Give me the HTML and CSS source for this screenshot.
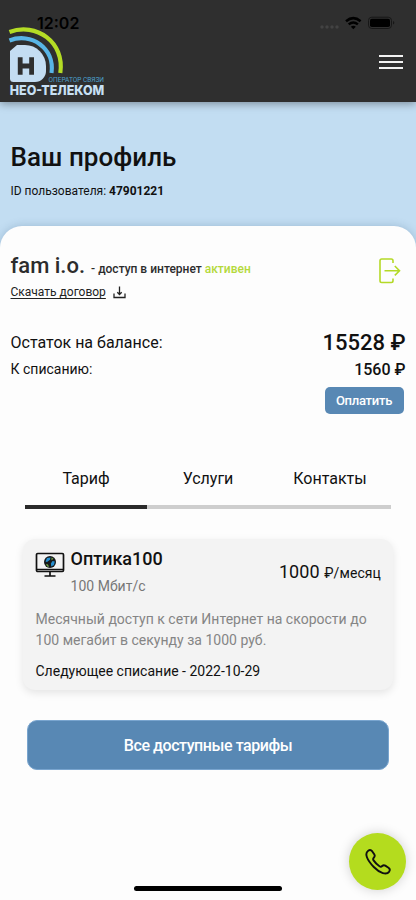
FILE: index.html
```html
<!DOCTYPE html>
<html lang="ru">
<head>
<meta charset="utf-8">
<meta name="viewport" content="width=device-width, initial-scale=1">
<title>Нео-Телеком</title>
<link rel="stylesheet" href="styles.css">
</head>
<body>
<header class="header">
  <svg class="logo" width="98" height="76" viewBox="9 25 98 76" aria-label="Нео-Телеком">
    <path d="M17 45h8a21 21 0 0 1 21 21v5a11 11 0 0 1-11 11H13.500a3.500 3.500 0 0 1-3.500-3.500V51z" fill="#c4ddf2"/>
    <path d="M20.200 57.300v17.400M31.600 57.300v17.400M20 66h12" fill="none" stroke="#2f2f2f" stroke-width="4.800"/>
    <path d="M9.500 40.500C31 32 55 48 51.500 73" fill="none" stroke="#58b5e6" stroke-width="4.200"/>
    <path d="M9.500 32C36 22 65 42 60.300 73" fill="none" stroke="#b4dc25" stroke-width="4.200"/>
    <text x="48.500" y="81.800" class="logo-sub" textLength="55.500" lengthAdjust="spacingAndGlyphs">ОПЕРАТОР СВЯЗИ</text>
    <text x="9.800" y="95" class="logo-name" textLength="94.500" lengthAdjust="spacingAndGlyphs">НЕО-ТЕЛЕКОМ</text>
  </svg>
  <button class="menu" aria-label="Меню"><span></span><span></span><span></span></button>
  <div class="status">
    <span class="time">12:02</span>
    <svg width="76" height="14" viewBox="319 16 76 14">
      <g fill="#434343"><circle cx="322" cy="27" r="1.700"/><circle cx="327" cy="27" r="1.700"/><circle cx="332" cy="27" r="1.700"/><circle cx="337" cy="27" r="1.700"/></g>
      <g fill="none" stroke="#000" stroke-width="2.500"><path d="M346 21.200q7.300-6.200 14.600 0M348.700 24.400q4.600-3.800 9.200 0"/></g>
      <path d="M350.800 26.800q2.500-1.900 5 0L353.300 29.300z"/>
      <rect x="368.500" y="17.200" width="23" height="11.300" rx="3.300" fill="none" stroke="#171717"/>
      <rect x="370" y="18.700" width="20" height="8.300" rx="1.800"/>
      <path d="M393 21v3.500q1.300-.4 1.300-1.700T393 21z" fill="#171717"/>
    </svg>
  </div>
</header>
<section class="hero">
  <h1>Ваш профиль</h1>
  <p>ID пользователя: <b>47901221</b></p>
</section>
<main class="sheet">
  <div class="account">
    <div>
      <div class="name-line"><span class="name">fam i.o.</span><span class="access">- доступ в интернет <em>активен</em></span></div>
      <a class="contract"><span>Скачать договор</span>
        <svg width="13" height="13" viewBox="0 0 13 13" fill="none" stroke="#222" stroke-width="1.300"><path d="M1 7.500V11.500H12V7.500M6.500.5V8.500M4.300 6.300l2.200 2.200 2.200-2.200"/></svg></a>
    </div>
    <svg class="exit" width="22" height="26" viewBox="0 0 22 26" fill="none" stroke="#b4d927" stroke-width="1.600"><path d="M14 5V2.700Q14 1 12.300 1H2.700Q1 1 1 2.700V22.800Q1 24.500 2.700 24.500H12.300Q14 24.500 14 22.800V20.500M5.500 12.700H20.500M15.800 8l4.700 4.700-4.700 4.700"/></svg>
  </div>
  <dl class="balance">
    <div class="row total"><dt>Остаток на балансе:</dt><dd>15528 ₽</dd></div>
    <div class="row due"><dt>К списанию:</dt><dd>1560 ₽</dd></div>
  </dl>
  <button class="pay">Оплатить</button>
  <nav class="tabs"><a class="active">Тариф</a><a>Услуги</a><a>Контакты</a></nav>
  <article class="card">
    <div class="card-head">
      <svg width="30" height="26" viewBox="0 0 30 26"><rect x="1.500" y="1.500" width="27" height="18" rx="1.200" fill="none" stroke="#111" stroke-width="1.700"/><path d="M2 17.500H28M15 19v5M9.500 24h11" fill="none" stroke="#111" stroke-width="1.700"/><circle cx="15" cy="10" r="6" fill="#15191b"/><path d="M12 6l3.500-.5-.5 2.300-3 2.200-1.500-.5zM17.500 9l2.300.5-.8 3.500-2.800 1.500-.3-3z" fill="#278fcf"/><path d="M16.500 5.500l2 1.300-2 1.400zM11 12l2 .5 1 2.500-2-.7z" fill="#77a947"/></svg>
      <div class="plan"><h2>Оптика100</h2><p>100 Мбит/с</p></div>
      <div class="price">1000 <span>₽/месяц</span></div>
    </div>
    <p class="desc">Месячный доступ к сети Интернет на скорости до<br>100 мегабит в секунду за 1000 руб.</p>
    <p class="next">Следующее списание - 2022-10-29</p>
  </article>
  <button class="all">Все доступные тарифы</button>
</main>
<button class="call" aria-label="Позвонить">
  <svg width="26" height="26" viewBox="0 0 26 26" fill="none" stroke="#111" stroke-width="1.900" stroke-linejoin="round"><path d="M3.200 1.700 Q5.500.1 7.300 2.400 L9.400 5.600 Q10.300 7.300 8.800 8.700 Q7.600 10 8.600 11.400 Q11 15 14.500 17.300 Q16 18.200 17.200 17 Q18.600 15.600 20.300 16.600 L23.500 18.700 Q25.700 20.300 24.200 22.600 C21.500 26.500 15 24.300 8.800 18 C2 11-.8 4.500 3.200 1.700Z"/></svg>
</button>
<div class="home-bar"></div>
</body>
</html>
```
FILE: styles.css
```css
* { box-sizing: border-box; }
body { margin: 0; height: 900px; overflow: hidden; position: relative; display: flex; flex-direction: column; background: #c2ddf2; color: #111; font-family: Roboto, sans-serif; }
h1, h2, p, dl, dd { margin: 0; }
button { border: 0; padding: 0; font-family: inherit; }
.header { position: relative; z-index: 1; flex: none; height: 102px; padding: 25px 13px 0 9px; display: flex; justify-content: space-between; align-items: flex-start; background: #2f2f2f; box-shadow: 0 2px 8px rgba(0,0,0,.35); }
.logo { overflow: visible; }
.logo-sub { font: 6.500px Roboto, sans-serif; fill: #4c9fc9; }
.logo-name { font: 800 13.500px Inter, sans-serif; fill: #c8e0f4; }
.menu { width: 24px; margin-top: 30px; display: grid; gap: 4px; background: none; }
.menu span { height: 2px; background: #f2f2f2; }
.status { position: absolute; top: 14px; left: 37px; right: 21px; display: flex; justify-content: space-between; align-items: center; height: 18px; }
.time { font: 600 16px/18px Inter, sans-serif; color: #000; }
.hero { flex: none; height: 124px; padding: 39px 10.500px 0; }
h1 { font-size: 26px; line-height: 32px; font-weight: 500; letter-spacing: .05px; }
.hero p { margin-top: 10px; font-size: 12px; line-height: 16px; }
.sheet { flex: 1; padding: 25px 10.500px 0; background: #fdfdfd; border-radius: 22px 22px 0 0; box-shadow: 0 0 8px rgba(40,80,120,.25); }
.account { display: flex; justify-content: space-between; }
.name-line { display: flex; align-items: baseline; gap: 6px; height: 31px; line-height: 30px; }
.name { font-size: 22px; font-weight: 500; color: #2c2c2c; }
.access { font-size: 12px; font-weight: 500; color: #2c2c2c; }
.access em { font-style: normal; color: #b4d93b; }
.contract { display: flex; gap: 7px; align-items: center; height: 20px; font-size: 12px; line-height: 20px; color: #222; text-decoration: underline; text-underline-offset: 2px; }
.exit { margin: 7px 4.500px 0 0; }
.balance { margin-top: 24px; }
.row { display: flex; justify-content: space-between; align-items: center; }
.total { height: 32px; font-size: 16px; }
.total dd { font-size: 22px; font-weight: 500; }
.due { height: 22px; font-size: 14px; }
.due dd { font-size: 16px; font-weight: 500; }
.pay { display: block; width: 79px; height: 27px; margin: 7px 2px 0 auto; border-radius: 5px; background: #5888b4; color: #fff; font-size: 13px; font-weight: 500; letter-spacing: -.25px; }
.tabs { margin: 45px 14.500px 0; display: grid; grid-template-columns: repeat(3, 1fr); text-align: center; font-size: 16px; line-height: 39px; }
.tabs a { height: 50px; border-bottom: 4px solid #cecece; }
.tabs .active { border-color: #2b2b2b; }
.card { height: 151px; margin: 30px 12.500px 0; padding: 8px 12px 8px 12.500px; border-radius: 12px; background: #f3f3f3; box-shadow: 0 3px 8px rgba(0,0,0,.1); }
.card-head { display: flex; height: 62px; }
.card-head > svg { margin: 5px 6px 0 -1px; }
.plan { flex: 1; }
h2 { font-size: 18px; line-height: 24px; font-weight: 500; }
.plan p { margin-top: 6px; font-size: 14px; line-height: 18px; letter-spacing: .03px; color: #777; }
.price { margin-top: 13px; font-size: 18px; line-height: 24px; letter-spacing: .08px; }
.price span { font-size: 14px; }
.desc { font-size: 14px; line-height: 21px; letter-spacing: .015px; color: #858585; white-space: nowrap; }
.next { margin-top: 10px; font-size: 14px; line-height: 20px; }
.all { display: block; width: 362px; height: 50px; margin: 30px 0 0 16.500px; border: 1px solid #79a5cf; border-radius: 10px; background: #5888b4; color: #fff; font-size: 16px; font-weight: 500; letter-spacing: -.43px; }
.call { position: absolute; left: 349px; top: 833px; width: 57px; height: 57px; display: grid; place-items: center; border-radius: 50%; background: #b4dc1e; box-shadow: 0 0 12px rgba(0,0,0,.18); }
.home-bar { position: absolute; left: 134px; top: 886px; width: 148px; height: 5px; border-radius: 3px; background: #000; }
```
